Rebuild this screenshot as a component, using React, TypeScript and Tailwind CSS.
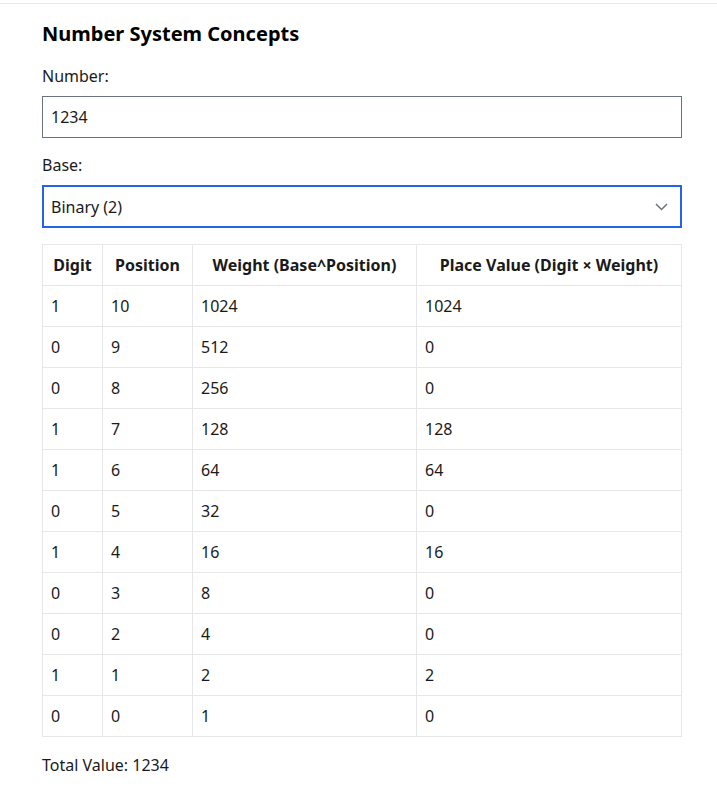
import { useMemo, useState } from "react";

const BASES = [
  { label: "Binary (2)", value: 2 },
  { label: "Octal (8)", value: 8 },
  { label: "Decimal (10)", value: 10 },
  { label: "Hexadecimal (16)", value: 16 },
];

export default function App() {
  const [num, setNum] = useState("1234");
  const [base, setBase] = useState(2);

  const rows = useMemo(() => {
    const n = parseInt(num, 10) || 0;
    const digits = n.toString(base).toUpperCase().split("");
    return digits.map((d, i) => {
      const pos = digits.length - 1 - i;
      const weight = Math.pow(base, pos);
      return { d, pos, weight, value: parseInt(d, base) * weight };
    });
  }, [num, base]);

  const total = rows.reduce((s, r) => s + r.value, 0);

  return (
    <div
      className="min-h-screen bg-white pt-[3px] text-[#1a1a1a]"
      style={{ fontFamily: '"Segoe UI", "Noto Sans", "Open Sans", sans-serif' }}
    >
      <div className="border-t border-gray-200 px-[42px] pt-4">
        <div className="w-[640px]">
          <h2 className="mb-4 text-xl leading-7 font-bold text-black">Number System Concepts</h2>

          <label className="mb-2 block text-base leading-6">Number:</label>
          <input
            value={num}
            onChange={(e) => setNum(e.target.value)}
            className="mb-[15px] block h-[42px] w-full border border-gray-500 px-2 text-base outline-none"
          />

          <label className="mb-2 block text-base leading-6">Base:</label>
          <div className="relative mb-4">
            <select
              value={base}
              onChange={(e) => setBase(Number(e.target.value))}
              className="block h-[43px] w-full appearance-none border-2 border-[#2563eb] bg-white px-[7px] text-base outline-none"
            >
              {BASES.map((b) => (
                <option key={b.value} value={b.value}>
                  {b.label}
                </option>
              ))}
            </select>
            <svg
              className="pointer-events-none absolute top-[18px] right-[14px]"
              width="13"
              height="8"
              viewBox="0 0 13 8"
              fill="none"
              stroke="#6b7280"
              strokeWidth="1.5"
            >
              <path d="M1 1l5.5 5.5L12 1" />
            </svg>
          </div>

          <table className="w-full table-fixed border-collapse text-base leading-6">
            <colgroup>
              <col className="w-[60px]" />
              <col className="w-[90px]" />
              <col className="w-[224px]" />
              <col />
            </colgroup>
            <thead>
              <tr>
                <th className="border border-gray-200 px-2 py-2 text-center font-bold">Digit</th>
                <th className="border border-gray-200 px-2 py-2 text-center font-bold">Position</th>
                <th className="border border-gray-200 px-2 py-2 text-center font-bold">Weight (Base^Position)</th>
                <th className="border border-gray-200 px-2 py-2 text-center font-bold">Place Value (Digit × Weight)</th>
              </tr>
            </thead>
            <tbody>
              {rows.map((r, i) => (
                <tr key={i}>
                  <td className="border border-gray-200 px-2 py-2">{r.d}</td>
                  <td className="border border-gray-200 px-2 py-2">{r.pos}</td>
                  <td className="border border-gray-200 px-2 py-2">{r.weight}</td>
                  <td className="border border-gray-200 px-2 py-2">{r.value}</td>
                </tr>
              ))}
            </tbody>
          </table>

          <p className="mt-4 text-base leading-6">Total Value: {total}</p>
        </div>
      </div>
    </div>
  );
}
